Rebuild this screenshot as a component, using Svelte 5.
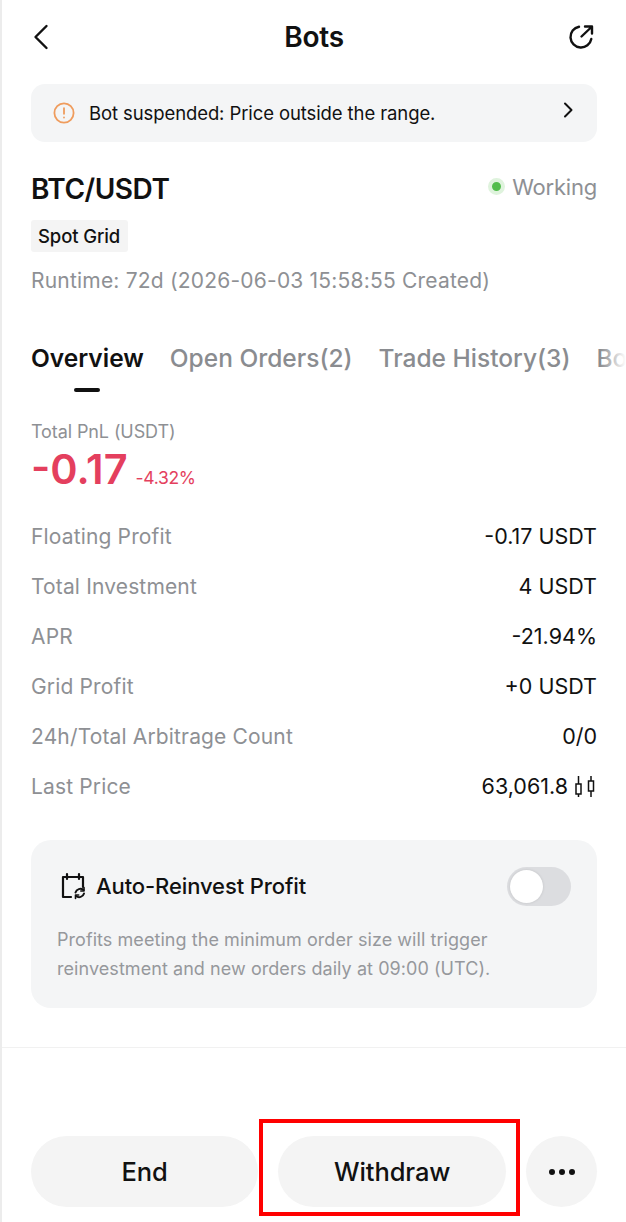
<script lang="ts">
    const rows = [
        { label: "Floating Profit", value: "-0.17 USDT" },
        { label: "Total Investment", value: "4 USDT" },
        { label: "APR", value: "-21.94%" },
        { label: "Grid Profit", value: "+0 USDT" },
        { label: "24h/Total Arbitrage Count", value: "0/0" },
        { label: "Last Price", value: "63,061.8", candles: true },
    ];
    const tabs = ["Overview", "Open Orders(2)", "Trade History(3)", "Bot Details"];
</script>

<div class="page">
    <header class="nav">
        <svg class="back" width="18" height="26" viewBox="0 0 18 26" fill="none" stroke="#111" stroke-width="2.4" stroke-linecap="round" stroke-linejoin="round">
            <path d="M14.5 2 3.5 13l11 11" />
        </svg>
        <h1>Bots</h1>
        <svg class="share" width="28" height="28" viewBox="0 0 28 28" fill="none" stroke="#111" stroke-width="2.4" stroke-linecap="round" stroke-linejoin="round">
            <path d="M12 3.7A10.5 10.5 0 1 0 24.3 16" />
            <path d="M14.5 13.5 24.5 4M18 3.5h7v7" />
        </svg>
    </header>

    <div class="alert">
        <svg width="22" height="22" viewBox="0 0 22 22" fill="none" stroke="#ef9c5d" stroke-width="1.8" stroke-linecap="round">
            <circle cx="11" cy="11" r="9.6" />
            <path d="M11 6.2v5.6M11 15.4v.2" />
        </svg>
        <span class="alert-text">Bot suspended: Price outside the range.</span>
        <svg class="alert-arrow" width="10" height="16" viewBox="0 0 10 16" fill="none" stroke="#111" stroke-width="2" stroke-linecap="round" stroke-linejoin="round">
            <path d="M2 1.5 8.5 8 2 14.5" />
        </svg>
    </div>

    <section class="summary">
        <div class="pair-row">
            <span class="pair">BTC/USDT</span>
            <span class="status"><i class="dot"></i>Working</span>
        </div>
        <span class="chip">Spot Grid</span>
        <p class="runtime">Runtime: 72d (2026-06-03 15:58:55 Created)</p>
    </section>

    <nav class="tabs">
        {#each tabs as tab, i}
            <span class="tab" class:active={i === 0}>{tab}</span>
        {/each}
        <i class="fade"></i>
    </nav>

    <section class="pnl">
        <div class="pnl-label">Total PnL (USDT)</div>
        <div class="pnl-value">-0.17<small>-4.32%</small></div>
    </section>

    <dl class="rows">
        {#each rows as row}
            <div class="row">
                <dt>{row.label}</dt>
                <dd>
                    {row.value}
                    {#if row.candles}
                        <svg width="20" height="21" viewBox="0 0 20 21" fill="none" stroke="#111" stroke-width="1.5">
                            <path d="M3.5 0v8M3.5 18v3M16 0v5M16 15v6" />
                            <rect x="1" y="8" width="5" height="10" />
                            <rect x="13.5" y="5" width="5" height="10" />
                        </svg>
                    {/if}
                </dd>
            </div>
        {/each}
    </dl>

    <section class="card">
        <div class="card-head">
            <svg width="26" height="28" viewBox="0 0 26 28" fill="none" stroke="#111" stroke-width="2.2" stroke-linecap="round" stroke-linejoin="round">
                <path d="M11 25H3V5h20v10M7 2v5M19 2v5" />
                <path d="M15.5 20.5a5 5 0 0 1 8-2.5M24 21.5a5 5 0 0 1-8 2.5" stroke-width="2" />
                <path d="M24 15.5V19h-3.2M15.5 26.5V23h3.2" stroke-width="1.6" />
            </svg>
            <span class="card-title">Auto-Reinvest Profit</span>
            <span class="toggle"><i></i></span>
        </div>
        <p class="card-note">Profits meeting the minimum order size will trigger reinvestment and new orders daily at 09:00 (UTC).</p>
    </section>

    <hr />

    <footer class="actions">
        <button>End</button>
        <span class="marked">
            <button>Withdraw</button>
            <i class="highlight"></i>
        </span>
        <button class="more" aria-label="More"><i></i><i></i><i></i></button>
    </footer>
</div>

<style>
    :global(body) {
        margin: 0;
        background: #fff;
    }

    .page {
        position: relative;
        width: 626px;
        height: 1222px;
        box-sizing: border-box;
        padding: 0 29px;
        border-left: 2px solid #ececec;
        overflow: hidden;
        font-family: Inter, "Liberation Sans", sans-serif;
        color: #111;
    }

    .nav {
        height: 74px;
        display: grid;
        grid-template-columns: 1fr auto 1fr;
        align-items: center;
    }

    .nav h1 {
        margin: 0;
        font-size: 28px;
        font-weight: 600;
        letter-spacing: -0.2px;
    }

    .back {
        margin-left: 1px;
    }

    .share {
        justify-self: end;
        margin-right: 2px;
    }

    .alert {
        margin-top: 10px;
        height: 58px;
        box-sizing: border-box;
        padding: 0 24px 0 22px;
        display: flex;
        align-items: center;
        gap: 14px;
        background: #f4f5f6;
        border-radius: 14px;
    }

    .alert-text {
        flex: 1;
        font-size: 18.5px;
        letter-spacing: -0.1px;
    }

    .alert-arrow {
        margin-top: -6px;
    }

    .summary {
        margin-top: 30px;
    }

    .pair-row {
        display: flex;
        align-items: center;
        justify-content: space-between;
        height: 34px;
    }

    .pair {
        font-size: 28px;
        font-weight: 600;
        letter-spacing: -0.5px;
    }

    .status {
        display: flex;
        align-items: center;
        gap: 7px;
        font-size: 22px;
        color: #8e9094;
        letter-spacing: -0.2px;
        margin-top: -5px;
    }

    .dot {
        width: 9px;
        height: 9px;
        border-radius: 50%;
        background: #52bd4c;
        border: 4px solid #dff3dd;
    }

    .chip {
        display: inline-block;
        margin-top: 14px;
        padding: 0 8px 0 7px;
        height: 32px;
        line-height: 32px;
        background: #f4f4f4;
        border-radius: 3px;
        font-size: 18.5px;
        font-weight: 500;
        letter-spacing: -0.1px;
    }

    .runtime {
        margin: 15px 0 0;
        font-size: 21px;
        line-height: 28px;
        color: #8e9094;
        letter-spacing: 0.2px;
    }

    .tabs {
        position: relative;
        margin: 47px -29px 0 0;
        height: 60px;
        display: flex;
        gap: 26px;
        white-space: nowrap;
        overflow: hidden;
    }

    .tab {
        position: relative;
        height: 60px;
        line-height: 32px;
        font-size: 24.5px;
        font-weight: 500;
        color: #8a8c90;
    }

    .tab.active {
        color: #111;
        font-weight: 600;
    }

    .tab.active::after {
        content: "";
        position: absolute;
        left: 50%;
        bottom: 10px;
        width: 26px;
        height: 4px;
        margin-left: -13px;
        border-radius: 2px;
        background: #111;
    }

    .fade {
        position: absolute;
        right: 0;
        top: 0;
        width: 26px;
        height: 40px;
        background: linear-gradient(to right, rgba(255, 255, 255, 0), #fff);
    }

    .pnl {
        margin-top: 18px;
    }

    .pnl-label {
        font-size: 18px;
        line-height: 24px;
        color: #8e9094;
        letter-spacing: -0.1px;
    }

    .pnl-value {
        margin-top: 2px;
        display: flex;
        align-items: baseline;
        gap: 8px;
        font-size: 41.5px;
        line-height: 46px;
        font-weight: 600;
        color: #e43f5e;
    }

    .pnl-value small {
        font-size: 17.5px;
        font-weight: 400;
        letter-spacing: -0.3px;
    }

    .rows {
        margin: 10px 0 0;
    }

    .row {
        display: flex;
        align-items: center;
        justify-content: space-between;
        height: 50px;
    }

    dt {
        font-size: 21px;
        color: #8e9094;
        letter-spacing: 0.15px;
    }

    dd {
        margin: 0;
        display: flex;
        align-items: center;
        gap: 7px;
        font-size: 21.5px;
    }

    dd svg {
        margin-right: 2px;
    }

    .card {
        margin-top: 29px;
        height: 168px;
        box-sizing: border-box;
        padding: 26px 26px 0;
        background: #f4f5f6;
        border-radius: 20px;
    }

    .card-head {
        display: flex;
        align-items: center;
        gap: 10px;
        height: 40px;
        padding-left: 3px;
    }

    .card-title {
        flex: 1;
        font-size: 22px;
        font-weight: 500;
        letter-spacing: -0.1px;
    }

    .toggle {
        display: block;
        width: 64px;
        height: 39px;
        border-radius: 20px;
        background: #dcdde0;
    }

    .toggle i {
        display: block;
        width: 33px;
        height: 33px;
        margin: 3px;
        border-radius: 50%;
        background: #fff;
        box-shadow: 0 0 3px rgba(0, 0, 0, 0.12);
    }

    .card-note {
        margin: 19px 0 0;
        font-size: 18px;
        line-height: 29px;
        color: #96989c;
        letter-spacing: 0.06px;
    }

    hr {
        margin: 39px -29px 0 -29px;
        border: 0;
        border-top: 1px solid #f1f1f1;
    }

    .actions {
        margin-top: 88px;
        display: flex;
        gap: 20px;
    }

    .actions button {
        display: block;
        width: 228px;
        height: 71px;
        padding: 0;
        border: 0;
        border-radius: 36px;
        background: #f4f4f4;
        font: 500 25.5px Inter, "Liberation Sans", sans-serif;
        letter-spacing: -0.1px;
        color: #111;
    }

    .marked {
        position: relative;
    }

    .highlight {
        position: absolute;
        left: -19px;
        top: -17px;
        width: 261px;
        height: 97px;
        box-sizing: border-box;
        border: 4px solid #ff0000;
    }

    .actions .more {
        width: 71px;
        display: flex;
        align-items: center;
        justify-content: center;
        gap: 4px;
    }

    .more i {
        width: 6px;
        height: 6px;
        border-radius: 50%;
        background: #111;
    }
</style>
